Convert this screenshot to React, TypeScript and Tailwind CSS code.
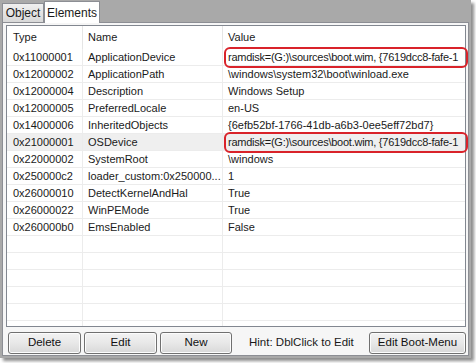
import React from "react";

type Row = { type: string; name: string; value: string; selected?: boolean; marked?: boolean };

const rows: Row[] = [
  { type: "0x11000001", name: "ApplicationDevice", value: "ramdisk=(G:)\\sources\\boot.wim, {7619dcc8-fafe-1", marked: true },
  { type: "0x12000002", name: "ApplicationPath", value: "\\windows\\system32\\boot\\winload.exe" },
  { type: "0x12000004", name: "Description", value: "Windows Setup" },
  { type: "0x12000005", name: "PreferredLocale", value: "en-US" },
  { type: "0x14000006", name: "InheritedObjects", value: "{6efb52bf-1766-41db-a6b3-0ee5eff72bd7}" },
  { type: "0x21000001", name: "OSDevice", value: "ramdisk=(G:)\\sources\\boot.wim, {7619dcc8-fafe-1", selected: true, marked: true },
  { type: "0x22000002", name: "SystemRoot", value: "\\windows" },
  { type: "0x250000c2", name: "loader_custom:0x250000...", value: "1" },
  { type: "0x26000010", name: "DetectKernelAndHal", value: "True" },
  { type: "0x26000022", name: "WinPEMode", value: "True" },
  { type: "0x260000b0", name: "EmsEnabled", value: "False" },
];

const font = { fontFamily: '"Liberation Sans", Arial, sans-serif' };

const Button = ({ label, w }: { label: string; w: string }) => (
  <button
    className={`${w} h-[22px] rounded-[3px] border border-[#707070] bg-gradient-to-b from-[#f3f3f3] via-[#e8e8e8] to-[#d8d8d8] text-[11.5px] text-[#111] shadow-[inset_0_0_0_1px_#fcfcfc]`}
  >
    {label}
  </button>
);

const App = () => {
  const empty = Array.from({ length: 6 });

  return (
    <div className="relative w-[476px] h-[363px] bg-white text-[#1a1a1a]" style={font}>
      <div className="w-[471px] h-[358px] bg-[#a9a9a9] flex flex-col shadow-[3px_3px_3px_rgba(0,0,0,0.45)]">
        {/* tabs */}
        <div className="h-[22px] flex items-end pl-[2px]">
          <div className="w-[42px] h-[19px] bg-gradient-to-b from-[#f0f0f0] to-[#d8d8d8] border border-b-0 border-[#8c8e94] text-[12px] flex items-center justify-center">
            Object
          </div>
          <div className="w-[56px] h-[22px] -mb-[1px] bg-white border border-b-0 border-[#8c8e94] text-[12px] flex items-start justify-center pt-[2px] z-10">
            Elements
          </div>
        </div>

        {/* page */}
        <div className="flex-1 mx-[2px] mb-[2px] bg-[#f6f6f6] border border-[#8c8e94] pt-[2px] pl-[3px] pr-[2px] flex flex-col">
          <div className="h-[302px] bg-white border border-[#828790] overflow-hidden">
            {/* header */}
            <div className="flex h-[23px] text-[11px]">
              <div className="w-[76px] pl-[6px] flex items-center border-r border-[#e5e5e5]">Type</div>
              <div className="w-[140px] pl-[5px] flex items-center border-r border-[#e5e5e5]">Name</div>
              <div className="flex-1 pl-[5px] flex items-center">Value</div>
            </div>

            {rows.map((r) => (
              <div
                key={r.type}
                className={`flex h-[17px] text-[11px] border-b border-[#ececec] ${r.selected ? "bg-[#efefef]" : ""}`}
              >
                <div className="w-[76px] pl-[6px] flex items-center border-r border-[#ececec] whitespace-nowrap">{r.type}</div>
                <div className="w-[140px] pl-[5px] flex items-center border-r border-[#ececec] whitespace-nowrap">{r.name}</div>
                <div className={`flex-1 pl-[5px] flex items-center whitespace-nowrap ${r.marked ? "tracking-[-0.25px]" : ""}`}>
                  {r.value}
                </div>
              </div>
            ))}

            {empty.map((_, i) => (
              <div key={i} className="flex h-[17px] border-b border-[#ececec]">
                <div className="w-[76px] border-r border-[#ececec]" />
                <div className="w-[140px] border-r border-[#ececec]" />
                <div className="flex-1" />
              </div>
            ))}
          </div>

          {/* buttons */}
          <div className="flex items-center mt-[5px] pl-[2px]">
            <Button label="Delete" w="w-[73px]" />
            <div className="w-[3px]" />
            <Button label="Edit" w="w-[73px]" />
            <div className="w-[3px]" />
            <Button label="New" w="w-[72px]" />
            <div className="w-[137px] text-[11.5px] pl-[17px] whitespace-nowrap">Hint: DblClick to Edit</div>
            <Button label="Edit Boot-Menu" w="w-[97px]" />
          </div>
        </div>
      </div>

      {/* red annotation marks */}
      <div className="absolute left-[224px] top-[47px] w-[244px] h-[21px] rounded-[6px] border-2 border-[#d9232a]" />
      <div className="absolute left-[224px] top-[132px] w-[244px] h-[21px] rounded-[6px] border-2 border-[#d9232a]" />
    </div>
  );
};

export default App;
